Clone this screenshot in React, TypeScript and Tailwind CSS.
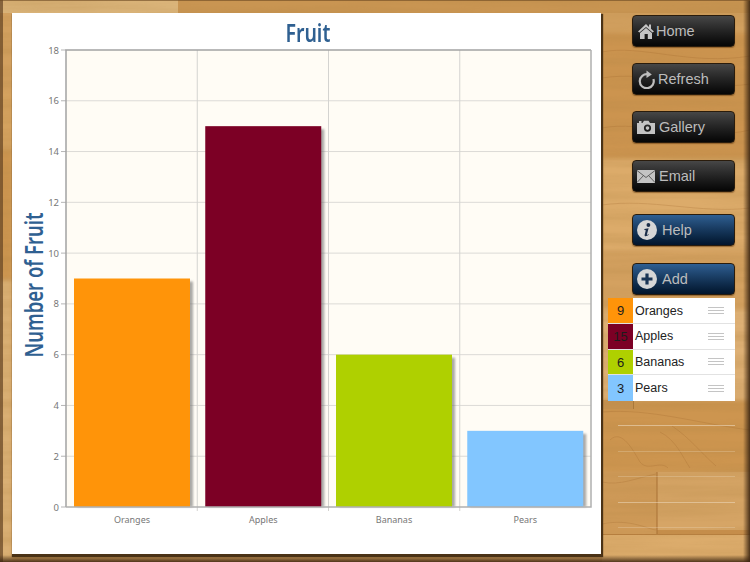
import type { ReactNode } from "react";

const fruit = [
  { name: "Oranges", value: 9, color: "#ff9409" },
  { name: "Apples", value: 15, color: "#7c0025" },
  { name: "Bananas", value: 6, color: "#afd000" },
  { name: "Pears", value: 3, color: "#82c6ff" },
];

const plotLeft = 54;
const plotTop = 37;
const plotRight = 579;
const plotBottom = 494;
const unit = (plotBottom - plotTop) / 18;
const colWidth = (plotRight - plotLeft) / 4;

const grainLines = [
  "M602 52 C640 44 690 66 750 56",
  "M602 78 C650 70 700 92 750 84",
  "M602 128 C640 120 700 142 750 130",
  "M602 205 C650 198 700 214 750 208",
  "M610 440 C622 428 634 452 640 462 C648 472 660 460 668 468",
  "M660 432 C676 440 682 456 690 468",
  "M672 426 C690 438 700 452 716 466",
  "M602 412 C650 408 700 424 750 430",
  "M602 482 C620 486 636 478 656 474",
  "M602 524 C630 518 650 530 656 530",
];

function WoodBackground() {
  return (
    <svg className="absolute inset-0" width="750" height="562" aria-hidden="true">
      <defs>
        <filter id="grain" x="0" y="0" width="100%" height="100%">
          <feTurbulence type="fractalNoise" baseFrequency="0.005 0.09" numOctaves="4" seed="11" />
          <feColorMatrix values="0 0 0 0 0.45  0 0 0 0 0.24  0 0 0 0 0.06  1.5 0 0 0 -0.45" />
        </filter>
        <filter id="soft">
          <feGaussianBlur stdDeviation="2" />
        </filter>
        <linearGradient id="edgeRight" x1="0" x2="1" y1="0" y2="0">
          <stop offset="0" stopColor="#3a2410" stopOpacity="0" />
          <stop offset="1" stopColor="#3a2410" stopOpacity="0.9" />
        </linearGradient>
        <linearGradient id="edgeBottom" x1="0" x2="0" y1="0" y2="1">
          <stop offset="0" stopColor="#3a2410" stopOpacity="0" />
          <stop offset="1" stopColor="#3a2410" stopOpacity="0.85" />
        </linearGradient>
      </defs>
      <rect width="750" height="562" fill="#d2a05f" />
      <rect width="178" height="13" fill="#dcb67c" />
      <rect x="178" width="572" height="13" fill="#c99552" />
      <g filter="url(#soft)">
        <rect y="90" width="12" height="60" fill="#d4a25e" />
        <rect y="150" width="12" height="130" fill="#cc9550" />
        <rect y="280" width="12" height="282" fill="#dab074" />
        <rect x="602" y="33" width="148" height="126" fill="#cc9450" />
        <rect x="602" y="159" width="148" height="91" fill="#dcab6b" />
        <rect x="602" y="250" width="148" height="60" fill="#d4a160" />
        <rect x="602" y="310" width="148" height="90" fill="#deb074" />
        <rect x="602" y="400" width="148" height="72" fill="#cd954f" />
      </g>
      <rect x="602" y="472" width="55" height="63" fill="#cf9a58" />
      <rect x="657" y="472" width="93" height="58" fill="#d6a566" />
      <rect x="657" y="530" width="93" height="5" fill="#c78e4b" />
      <rect x="602" y="535" width="148" height="27" fill="#dcac6c" />
      <rect x="656.5" y="472" width="1" height="63" fill="#a86f33" />
      <rect x="602" y="534" width="148" height="1" fill="#b67e3e" />
      <rect x="602" y="400" width="32" height="9" fill="#c79250" />
      <rect x="633" y="400" width="1" height="9" fill="#a87536" />
      <rect width="750" height="562" filter="url(#grain)" opacity="0.35" />
      <g fill="none" stroke="#9c6329" strokeWidth="0.8" opacity="0.3">
        {grainLines.map((d) => (
          <path key={d} d={d} />
        ))}
      </g>
      <rect x="743" width="7" height="562" fill="url(#edgeRight)" />
      <rect width="3" height="562" fill="#5a3c1e" opacity="0.65" />
      <rect width="750" height="1" fill="#6a4822" opacity="0.6" />
      <rect y="555" width="750" height="7" fill="url(#edgeBottom)" />
    </svg>
  );
}

function Chart() {
  return (
    <svg width="589" height="541" className="absolute left-0 top-0">
      <defs>
        <filter id="barShadow" x="-10%" y="-5%" width="120%" height="110%">
          <feGaussianBlur stdDeviation="1.2" />
        </filter>
      </defs>
      <rect x={plotLeft} y={plotTop} width={plotRight - plotLeft} height={plotBottom - plotTop} fill="#fffcf5" />
      {Array.from({ length: 10 }, (_, i) => {
        const y = plotBottom - i * 2 * unit;
        return (
          <g key={i}>
            {i > 0 && i < 9 && <line x1={plotLeft} x2={plotRight} y1={y} y2={y} stroke="#dcdad6" strokeWidth="1" />}
            <line x1={plotLeft - 5} x2={plotLeft} y1={y} y2={y} stroke="#b5b5b5" strokeWidth="1" />
            <text x={plotLeft - 7} y={y + 3.5} textAnchor="end" fontSize="9.5" fill="#777777" fontFamily="'Noto Sans', sans-serif">
              {i * 2}
            </text>
          </g>
        );
      })}
      {[1, 2, 3].map((i) => (
        <line key={i} x1={plotLeft + i * colWidth} x2={plotLeft + i * colWidth} y1={plotTop} y2={plotBottom + 4} stroke="#d4d3d0" strokeWidth="1" />
      ))}
      {fruit.map((f, i) => {
        const x = plotLeft + 8 + i * colWidth - (i > 1 ? 0.5 : 0);
        const h = f.value * unit;
        return (
          <g key={f.name}>
            <rect x={x + 3} y={plotBottom - h + 3} width="116" height={h - 3} fill="#666666" opacity="0.55" filter="url(#barShadow)" />
            <rect x={x} y={plotBottom - h} width="116" height={h} fill={f.color} />
            <text x={x + 58} y={plotBottom + 16} textAnchor="middle" fontSize="9" fill="#777777" fontFamily="'Noto Sans', sans-serif">
              {f.name}
            </text>
          </g>
        );
      })}
      <path d={`M${plotRight} ${plotTop} H${plotLeft} V${plotBottom}`} fill="none" stroke="#a3a3a3" strokeWidth="1.5" />
      <path d={`M${plotLeft} ${plotBottom} H${plotRight} V${plotTop}`} fill="none" stroke="#b0b0b0" strokeWidth="1.5" />
      <text
        transform="translate(31 272) rotate(-90)"
        textAnchor="middle"
        fontSize="25"
        fontWeight="600"
        fill="#2f6091"
        fontFamily="'Noto Sans', sans-serif"
        textLength="145"
        lengthAdjust="spacingAndGlyphs"
      >
        Number of Fruit
      </text>
    </svg>
  );
}

function HomeIcon() {
  return (
    <svg width="18" height="18" viewBox="0 0 18 18" className="mr-[1px]">
      <path d="M9 2 L1 9.5 L2.5 10.5 L9 5 L15.5 10.5 L17 9.5 L14 6.8 V2.5 H12 V5 Z" fill="#c4c4c4" />
      <path d="M3 11 L9 6 L15 11 V17 H10.8 V12 H7.6 V17 H3 Z" fill="#c4c4c4" />
    </svg>
  );
}

function RefreshIcon() {
  return (
    <svg width="19" height="19" viewBox="0 0 19 19" className="mr-[2px]">
      <path d="M11 4.3 A7 7 0 1 0 16.4 9" fill="none" stroke="#bdbdbd" strokeWidth="2.2" />
      <path d="M9.5 0.5 L14.8 4.4 L9.5 8 Z" fill="#bdbdbd" />
    </svg>
  );
}

function CameraIcon() {
  return (
    <svg width="18" height="14" viewBox="0 0 18 14" className="mr-[4px]">
      <path
        fillRule="evenodd"
        d="M0 3 H2 V1 H4.5 V3 H5.5 L7 0.8 H11.5 L13 3 H18 V14 H0 Z M10.5 4.5 A3.6 3.6 0 1 0 10.5 11.7 A3.6 3.6 0 1 0 10.5 4.5 Z"
        fill="#c4c4c4"
      />
      <circle cx="10.5" cy="8.1" r="1.8" fill="#c4c4c4" />
    </svg>
  );
}

function MailIcon() {
  return (
    <svg width="18" height="13" viewBox="0 0 18 13" className="mr-[4px]">
      <rect width="18" height="13" fill="#c4c4c4" />
      <path d="M0 0.5 L9 7.5 L18 0.5 M0 12.5 L6.5 5.5 M18 12.5 L11.5 5.5" fill="none" stroke="#555555" strokeWidth="0.9" />
    </svg>
  );
}

function InfoIcon() {
  return (
    <svg width="20" height="20" viewBox="0 0 20 20" className="mr-[5px]">
      <circle cx="10" cy="10" r="10" fill="#d6d6d6" />
      <circle cx="11.4" cy="5" r="1.9" fill="#1b2d48" />
      <path d="M7.4 9 L11.6 8.2 L9.9 14.4 C9.8 15 10.2 15.1 11.6 14.2 L11.9 14.8 C10 16.3 7.4 17 7.6 15 L8.8 10.2 L7.4 10 Z" fill="#1b2d48" />
    </svg>
  );
}

function AddIcon() {
  return (
    <svg width="20" height="20" viewBox="0 0 20 20" className="mr-[5px]">
      <circle cx="10" cy="10" r="10" fill="#d6d6d6" />
      <path d="M8.4 4.5 H11.6 V8.4 H15.5 V11.6 H11.6 V15.5 H8.4 V11.6 H4.5 V8.4 H8.4 Z" fill="#1b3554" />
    </svg>
  );
}

function NavButton({ icon, label, blue, className }: { icon: ReactNode; label: string; blue?: boolean; className?: string }) {
  return (
    <button
      className={`flex h-8 w-[103px] items-center rounded-[4px] border border-[#2a1c0c] pl-1 text-[14.5px] leading-none text-[#bcbcbc] shadow-[0_1px_1px_rgba(90,50,10,0.5)] ${
        blue ? "bg-gradient-to-b from-[#2f5f92] to-[#03152c]" : "bg-gradient-to-b from-[#474747] to-[#060606]"
      } ${className ?? ""}`}
    >
      {icon}
      <span>{label}</span>
    </button>
  );
}

export default function App() {
  return (
    <div className="relative flex h-[562px] w-[750px] overflow-hidden pl-3 pt-[13px] font-['Liberation_Sans',Arial,sans-serif]">
      <WoodBackground />

      <div className="relative h-[541px] w-[589px] bg-white shadow-[1px_2px_1px_1px_#4a3216]">
        <div className="pl-[3px] pt-1 text-center">
          <span className="inline-block scale-x-75 font-['Noto_Sans',sans-serif] text-[26px] font-semibold leading-[30px] text-[#2f6091]">Fruit</span>
        </div>
        <Chart />
      </div>

      <div className="relative ml-[7px] flex w-[127px] flex-col pt-[2px]">
        <div className="ml-6 flex flex-col gap-4">
          <NavButton label="Home" icon={<HomeIcon />} />
          <NavButton label="Refresh" icon={<RefreshIcon />} />
          <NavButton label="Gallery" icon={<CameraIcon />} />
          <NavButton className="mt-px" label="Email" icon={<MailIcon />} />
          <NavButton blue className="mt-[6px]" label="Help" icon={<InfoIcon />} />
          <NavButton blue className="mt-px" label="Add" icon={<AddIcon />} />
        </div>

        <div className="mt-[3px] w-[127px] bg-white">
          {fruit.map((f, i) => (
            <div key={f.name} className={`flex h-[25.75px] items-center ${i < 3 ? "border-b border-[#e2e2e2]" : ""}`}>
              <span className="flex h-full w-[25px] items-center justify-center pt-px text-[13px] text-[#1c1c1c]" style={{ backgroundColor: f.color }}>
                {f.value}
              </span>
              <span className="ml-[2px] flex-1 pt-px text-[12.5px] text-[#222222]">{f.name}</span>
              <span className="mr-[11px] flex w-4 flex-col gap-[2px]">
                <span className="h-px bg-[#c4c4c4]" />
                <span className="h-px bg-[#c4c4c4]" />
                <span className="h-px bg-[#c4c4c4]" />
              </span>
            </div>
          ))}
        </div>

        <div className="ml-[10px] mt-[24px] flex w-[117px] flex-col gap-[24.5px]">
          {[0.5, 0.25, 0.25, 0.45, 0.25].map((o, i) => (
            <span key={i} className="h-px bg-[#f3e6d2]" style={{ opacity: o }} />
          ))}
        </div>
      </div>
    </div>
  );
}
